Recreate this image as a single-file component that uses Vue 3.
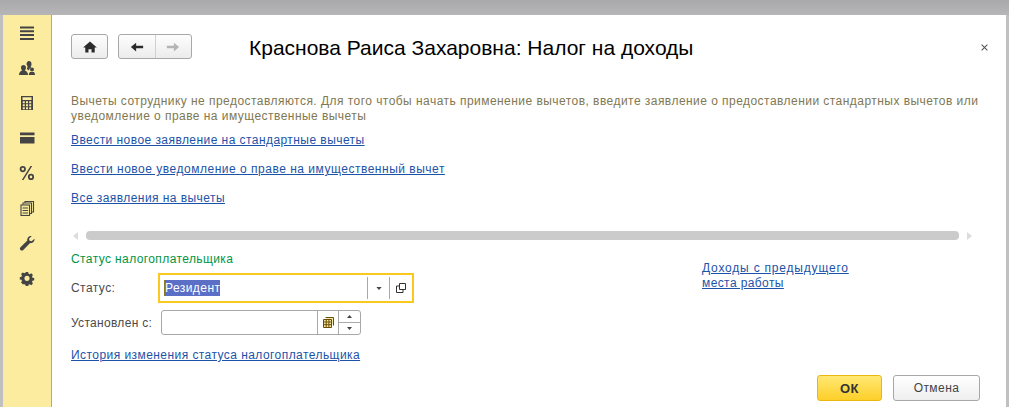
<script setup>
const links = [
  'Ввести новое заявление на стандартные вычеты',
  'Ввести новое уведомление о праве на имущественный вычет',
  'Все заявления на вычеты'
]
</script>

<template>
  <div class="page">
    <div class="window">
      <aside class="side">
        <svg class="ico" viewBox="0 0 16 16"><path d="M1 1.500h14v2H1zM1 5.300h14v2H1zM1 9.100h14v2H1zM1 12.900h14v2H1z" fill="#444"/></svg>
        <svg class="ico" viewBox="0 0 16 16"><path d="M0 15c0-3 1.500-4 3.200-4.600C2.200 9.500 2 8.500 2 7.500 2 6 3 5 4.500 5S7 6 7 7.500c0 1-.3 2-1.200 2.900C7.500 11 9 12 9 15z M7.500 4.500C7.500 2.500 8.500 1 10 1s2.500 1.300 2.500 3c0 1.200-.4 2.300-1 3l.8.6A3 3 0 0 0 10 10.500c-.6-.5-1.300-.9-2.200-1.200.5-.9.7-1.800.7-2.700 0-.8-.4-1.600-1-2.100z M13 7.500a2 2 0 1 1 0 4 2 2 0 0 1 0-4zM9.800 15c0-1.300.5-2.300 1.300-3h3.800c.7.600 1.100 1.600 1.100 3z" fill="#444"/></svg>
        <svg class="ico" viewBox="0 0 16 16"><path fill-rule="evenodd" d="M2 1h12v14H2zM3.500 2.300v2.700h9V2.300zM3.800 6.200v2h2v-2zm3.200 0v2h2v-2zm3.200 0v2h2v-2zM3.800 9.200v2h2v-2zm3.200 0v2h2v-2zm3.200 0v2h2v-2zM3.800 12.200v2h2v-2zm3.200 0v2h2v-2zm3.200 0v2h2v-2z" fill="#444"/></svg>
        <svg class="ico" viewBox="0 0 16 16"><path d="M1 2.500h14.500v2.700H1zM1 7h14.500v6.500H1z" fill="#444"/></svg>
        <svg class="ico" viewBox="0 0 16 16"><path fill-rule="evenodd" d="M3.800 1a3 3 0 1 1 0 6.200 3 3 0 0 1 0-6.200zm0 1.800a1.200 1.200 0 1 0 0 2.600 1.200 1.200 0 0 0 0-2.600zM12 8.800A3 3 0 1 1 12 15a3 3 0 0 1 0-6.200zm0 1.800a1.200 1.200 0 1 0 0 2.600 1.200 1.200 0 0 0 0-2.600zM11.500 1h1.700L4.500 15H2.800z" fill="#444"/></svg>
        <svg class="ico" viewBox="0 0 16 16"><g fill="none" stroke="#444" stroke-width="1.100"><path d="M6 3V1.500h8.500V12H13"/><path d="M4 4.500V3h8.500v10.500H11"/><rect x="2" y="5" width="8.500" height="10.500"/></g><path d="M3.500 7.500h5.500v1H3.500zM3.500 10h5.500v1H3.500zM3.500 12.500h5.500v1H3.500z" fill="#444"/></svg>
        <svg class="ico" viewBox="0 0 16 16"><path d="M15.500 3.800c.4 2.200-1.500 4.700-4.400 4.300L4.300 15c-.8.800-2 .8-2.800.1-.8-.8-.8-2 0-2.800l6.800-6.900C7.800 2.500 10.500.4 12.800 1L10 3.700l.6 2 2 .6z" fill="#444"/></svg>
        <svg class="ico" viewBox="0 0 16 16"><path fill-rule="evenodd" d="M6.600 1h2.800l.4 2 1.400.6 1.800-1.100 2 2-1.100 1.800.6 1.400 2 .4v2.800l-2 .4-.6 1.400 1.100 1.800-2 2-1.800-1.100-1.400.6-.4 2H6.600l-.4-2-1.400-.6L3 15.500l-2-2 1.100-1.800-.6-1.400-2-.4V7.100l2-.4.6-1.400L1 3.500l2-2 1.800 1.100 1.400-.6zM8 5.500a3 3 0 1 0 0 6 3 3 0 0 0 0-6z" transform="translate(1.200 1.100) scale(.85)" fill="#444"/></svg>
      </aside>

      <main class="content">
        <header class="head">
          <div class="btn home">
            <svg class="navico" viewBox="0 0 16 14"><path d="M8 .5 16 7.500H13.500V13.500H9.800V9.500H6.200V13.500H2.500V7.500H0z" fill="#2b2b2b"/></svg>
          </div>
          <div class="btn nav">
            <span class="half"><svg class="navico" viewBox="0 0 16 12"><path d="M7 1V4.500H15V7.500H7V11L1 6z" fill="#2b2b2b"/></svg></span>
            <span class="half"><svg class="navico" viewBox="0 0 16 12"><path d="M9 1V4.500H1V7.500H9V11L15 6z" fill="#b4b4b4"/></svg></span>
          </div>
          <h1 class="title">Краснова Раиса Захаровна: Налог на доходы</h1>
          <svg class="close" viewBox="0 0 8 8"><path d="M.7.700l6.600 6.600M7.300.700.700 7.300" stroke="#555" stroke-width="1.200"/></svg>
        </header>

        <p class="note">Вычеты сотруднику не предоставляются. Для того чтобы начать применение вычетов, введите заявление о предоставлении стандартных вычетов или уведомление о праве на имущественные вычеты</p>

        <div class="links">
          <a v-for="l in links" :key="l" class="link">{{ l }}</a>
        </div>

        <div class="scroll">
          <svg class="arr" viewBox="0 0 5 8"><path d="M5 0v8L0 4z" fill="#dcdcdc"/></svg>
          <div class="thumb"></div>
          <svg class="arr" viewBox="0 0 5 8"><path d="M0 0v8l5-4z" fill="#dcdcdc"/></svg>
        </div>

        <section class="lower">
          <div class="form">
            <div class="group">Статус налогоплательщика</div>
            <div class="row r1">
              <label class="lab">Статус:</label>
              <div class="focus">
                <div class="inp">
                  <span class="val"><span class="sel">Резидент</span></span>
                  <span class="cell c1"><svg class="tri" viewBox="0 0 7 4"><path d="M0 0h7L3.500 4z" fill="#444"/></svg></span>
                  <span class="cell c2"><svg class="open" viewBox="0 0 10 10"><path d="M3.500.500h6v6h-6zM3.500 3H.500v6.500h6.500V6.500" fill="none" stroke="#333"/></svg></span>
                </div>
              </div>
            </div>
            <div class="row r2">
              <label class="lab">Установлен с:</label>
              <div class="date">
                <span class="dval"></span>
                <span class="dcal"><svg class="cal" viewBox="0 0 11 11"><path d="M2.500.500h8v8M.500 2.500h8v8h-8zM.500 5h8M.500 7.700h8M3.200 2.500v8M5.900 2.500v8" fill="#f5e9a8" stroke="#6b4e00"/></svg></span>
                <span class="spin">
                  <span class="sp"><svg class="mini" viewBox="0 0 5 3"><path d="M0 3h5L2.500 0z" fill="#444"/></svg></span>
                  <span class="sp"><svg class="mini" viewBox="0 0 5 3"><path d="M0 0h5L2.500 3z" fill="#444"/></svg></span>
                </span>
              </div>
            </div>
            <a class="link hist">История изменения статуса налогоплательщика</a>
          </div>
          <a class="link income"><span class="wide">Доходы с предыдущего</span><br>места работы</a>
        </section>

        <footer class="foot">
          <button class="b ok">ОК</button>
          <button class="b cancel">Отмена</button>
        </footer>
      </main>
    </div>
  </div>
</template>

<style>
html, body { margin: 0; background: #b4b4b6; }
</style>

<style scoped>
.page {
  width: 1009px;
  height: 407px;
  box-sizing: border-box;
  padding: 15px 3px 0;
  overflow: hidden;
  background: linear-gradient(#a9a9ab, #b6b6b8 15px, #c0c0c0 15px);
  font-family: "Liberation Sans", Arial, sans-serif;
  font-size: 12px;
  letter-spacing: .44px;
}
.window { display: flex; height: 392px; background: #fff; }
.side {
  width: 48px;
  flex: none;
  background: #fbeca0;
  border-right: 1px solid #c8ae3a;
  display: flex;
  flex-direction: column;
  align-items: center;
  padding-top: 10px;
  gap: 19px;
}
.ico { width: 16px; height: 16px; display: block; flex: none; }
.content { flex: 1; min-width: 0; padding: 19px 26px 0 19px; display: flex; flex-direction: column; }
.head { display: flex; align-items: center; height: 25px; }
.btn {
  box-sizing: border-box;
  height: 25px;
  border: 1px solid #a8a8a8;
  border-radius: 3px;
  background: linear-gradient(#fdfdfd, #ececec);
  display: flex;
  align-items: center;
  justify-content: center;
}
.home { width: 37px; flex: none; }
.nav { width: 74px; margin-left: 10px; flex: none; }
.half { flex: 1; height: 100%; display: flex; align-items: center; justify-content: center; }
.half + .half { border-left: 1px solid #d0d0d0; }
.navico { width: 14px; height: 12px; display: block; }
.title {
  margin: 2px 0 0 57px;
  font-size: 21px;
  line-height: 25px;
  font-weight: 400;
  letter-spacing: 0;
  color: #000;
  white-space: nowrap;
}
.close { width: 7px; height: 7px; margin: 2px -8px 0 auto; flex: none; }
.note { margin: 35px 0 0; width: 916px; color: #7f7852; line-height: 15px; letter-spacing: .455px; }
.links { display: flex; flex-direction: column; gap: 14px; margin: 9px 0 0; align-items: flex-start; }
.link { color: #1c53a8; text-decoration: underline; line-height: 15px; }
.links .link:nth-child(2) { letter-spacing: .51px; }
.scroll { display: flex; align-items: center; gap: 8px; margin: 25px -1px 0 2px; height: 9px; }
.arr { width: 5px; height: 8px; flex: none; }
.thumb { width: 873px; height: 9px; background: #cbcbcb; border-radius: 4px; flex: none; }
.lower { display: flex; margin: 12px 0 0; }
.form { width: 631px; flex: none; }
.group { color: #009646; line-height: 15px; letter-spacing: .4px; }
.row { display: flex; align-items: center; }
.lab { width: 87px; flex: none; color: #4a4a4a; }
.r2 .lab { letter-spacing: .3px; }
.r1 { margin-top: 6px; height: 30px; }
.focus { width: 256px; height: 30px; box-sizing: border-box; border: 2px solid #fbc81e; padding: 2px 0 2px 1px; }
.inp { display: flex; height: 22px; align-items: stretch; }
.val { flex: 1; display: flex; align-items: center; padding-left: 3px; }
.sel { background: #5b6fc6; color: #fff; line-height: 16px; border-left: 1px solid #8a7a2a; }
.cell { display: flex; align-items: center; justify-content: center; border-left: 1px solid #a8a8a8; }
.c1 { width: 21px; }
.c2 { width: 22px; }
.tri { width: 6px; height: 3px; }
.open { width: 10px; height: 10px; }
.r2 { margin-top: 7px; height: 25px; }
.date {
  margin-left: 3px;
  width: 200px;
  height: 25px;
  box-sizing: border-box;
  border: 1px solid #a8a8a8;
  border-radius: 3px;
  display: flex;
}
.dval { flex: 1; }
.dcal { width: 20px; border-left: 1px solid #a8a8a8; display: flex; align-items: center; justify-content: center; }
.cal { width: 11px; height: 11px; }
.spin { width: 21px; border-left: 1px solid #a8a8a8; display: flex; flex-direction: column; }
.sp { flex: 1; display: flex; align-items: center; justify-content: center; }
.sp + .sp { border-top: 1px solid #a8a8a8; }
.mini { width: 5px; height: 3px; }
.hist { display: inline-block; margin-top: 13px; }
.income { margin-top: 9px; height: 30px; white-space: nowrap; letter-spacing: .4px; }
.wide { letter-spacing: .8px; }
.foot { display: flex; justify-content: flex-end; gap: 11px; margin-top: 12px; }
.b {
  box-sizing: border-box;
  height: 26px;
  border-radius: 3px;
  font-family: inherit;
  font-size: 12px;
  letter-spacing: .44px;
  padding: 0;
}
.ok { width: 65px; border: 1px solid #e8b810; background: linear-gradient(#ffe873, #fdcf2a); color: #333; font-weight: 700; font-size: 13px; }
.cancel { width: 87px; border: 1px solid #a8a8a8; background: linear-gradient(#fff, #eee); color: #444; }
</style>
